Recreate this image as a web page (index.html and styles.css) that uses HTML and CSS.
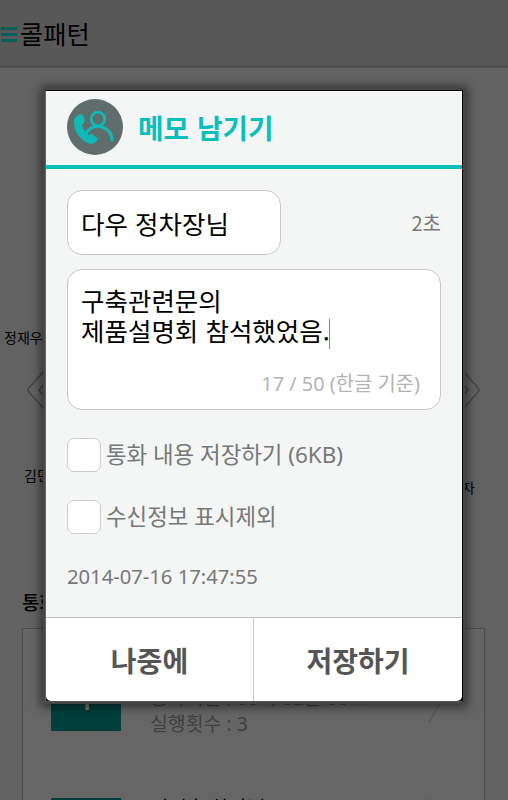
FILE: index.html
```html
<!DOCTYPE html>
<html lang="ko">
<head>
    <meta charset="UTF-8">
    <meta name="viewport" content="width=device-width, initial-scale=1.0">
    <title>콜패턴</title>
    <link rel="stylesheet" href="styles.css">
</head>
<body>
    <!-- 뒤쪽 화면 -->
    <div class="app">
        <header class="app-header">
            <div class="menu-icon"><span></span><span></span><span></span></div>
            <h1>콜패턴</h1>
        </header>

        <div class="pattern">
            <div class="name-first">정재우</div>
            <div class="arrows">
                <svg width="26" height="40" viewBox="0 0 26 40"><path d="M17 1 2 18q-2 2 0 4l15 17M17 14l-5 6 5 6"/></svg>
                <svg width="26" height="40" viewBox="0 0 26 40"><path d="M9 1l15 17q2 2 0 4L9 39M9 14l5 6-5 6"/></svg>
            </div>
            <div class="names">
                <span>김민</span>
                <span class="name-last">자</span>
            </div>
        </div>

        <h2 class="section-title">통화</h2>
        <div class="call-list">
            <div class="call-item">
                <div class="rank">1</div>
                <div class="call-info">
                    <span>통화시간 : 00시 02분 08초</span>
                    <span>실행횟수 : 3</span>
                </div>
                <svg class="more" width="20" height="70" viewBox="0 0 20 70"><path d="M3 9l15 26L3 61"/></svg>
            </div>
            <div class="call-item">
                <div class="rank"></div>
                <div class="call-info">
                    <strong>김기훈 차장님</strong>
                </div>
                <svg class="more" width="20" height="70" viewBox="0 0 20 70"><path d="M3 1l15 26L3 53"/></svg>
            </div>
        </div>
    </div>

    <!-- 메모 팝업 -->
    <div class="dialog">
        <div class="dialog-header">
            <svg class="dialog-icon" width="56" height="56" viewBox="0 0 56 56">
                <circle cx="28" cy="28" r="28" fill="#5f6e6d"/>
                <circle cx="31" cy="20" r="6.8" fill="none" stroke="#0eb9b7" stroke-width="2.8"/>
                <path d="M19.500 34c2-4 6.500-6.500 11.500-6.500 8 0 14 6 14 13.500" fill="none" stroke="#0eb9b7" stroke-width="3" stroke-linecap="round"/>
                <path d="M12.500 15.500c2.500-.8 4 .2 4.400 2.500l.6 3.500c.3 2-.7 3.300-2.700 4.500 1.200 4 3.800 8 7.200 10.200 2-1.500 3.300-1.400 5 0l2.500 2.200c1.500 1.400 1.100 3.100-.7 4.600-2.600 2.200-6.500 2.200-10.100-.1C11.500 38.500 7 31 7 23.500c0-4 2-7 5.500-8z" fill="#0eb9b7"/>
            </svg>
            <h2>메모 남기기</h2>
        </div>
        <div class="dialog-body">
            <div class="contact-row">
                <div class="contact-name">다우 정차장님</div>
                <span class="duration">2초</span>
            </div>
            <div class="memo">
                <div class="memo-text">구축관련문의<br>제품설명회 참석했었음.<span class="caret"></span></div>
                <div class="memo-count">17 / 50 (한글 기준)</div>
            </div>
            <label class="check-row"><span class="checkbox"></span><span>통화 내용 저장하기 (6KB)</span></label>
            <label class="check-row"><span class="checkbox"></span><span>수신정보 표시제외</span></label>
            <div class="timestamp">2014-07-16 17:47:55</div>
        </div>
        <div class="dialog-footer">
            <button>나중에</button>
            <button>저장하기</button>
        </div>
    </div>
</body>
</html>
```
FILE: styles.css
```css
* {
    box-sizing: border-box;
}

body {
    margin: 0;
    width: 508px;
    height: 800px;
    position: relative;
    overflow: hidden;
    background: #626262;
    color: #000;
    font-family: "Noto Sans CJK KR", sans-serif;
}

h1, h2 {
    margin: 0;
}

svg path {
    stroke-linejoin: round;
}

.app {
    height: 800px;
    overflow: hidden;
}

.app-header {
    display: flex;
    align-items: center;
    height: 68px;
    background: #585858;
    border-bottom: 3px solid #505050;
}

.menu-icon {
    display: flex;
    flex-direction: column;
    gap: 3px;
    width: 17px;
    padding-left: 1px;
    margin-right: 3px;
    margin-top: 3px;
}

.menu-icon span {
    height: 3px;
    background: #075e5e;
}

.app-header h1 {
    font-size: 25.3px;
    font-weight: 400;
    line-height: 36px;
}

/* 통화 패턴 영역 */
.pattern {
    height: 521px;
    padding-top: 259px;
    font-size: 14px;
    line-height: 20px;
}

.name-first {
    padding-left: 4px;
}

.arrows {
    display: flex;
    justify-content: space-between;
    padding: 23px 28px 0 27px;
}

.arrows path {
    fill: none;
    stroke: #444;
    stroke-width: 1.4;
}

.names {
    display: flex;
    justify-content: space-between;
    padding: 55px 33px 0 24px;
}

.name-last {
    padding-top: 12px;
}

.section-title {
    height: 39px;
    padding-left: 22px;
    font-size: 19px;
    font-weight: 500;
    line-height: 26px;
}

.call-list {
    width: 463px;
    height: 300px;
    margin-left: 22px;
    padding: 32px 38px 0 28px;
    border: 1px solid #4b4b4b;
    background: #666;
}

.call-item {
    display: flex;
    height: 137px;
}

.rank {
    width: 70px;
    height: 70px;
    margin-right: 29px;
    background: #003f3b;
    color: #777;
    font-family: "Noto Sans", sans-serif;
    font-size: 34px;
    font-weight: 500;
    line-height: 72px;
    text-align: center;
}

.call-info {
    flex: 1;
    display: flex;
    flex-direction: column;
    font-family: "Noto Sans", "Noto Sans CJK KR", sans-serif;
    font-size: 19.4px;
    line-height: 26px;
    color: #404040;
}

.call-info span:first-child {
    margin-top: 24px;
}

.call-info strong {
    margin-top: -2px;
    font-size: 20px;
    font-weight: 400;
    color: #000;
}

.more path {
    fill: none;
    stroke: #5b5b5b;
    stroke-width: 2;
}

/* 메모 팝업 */
.dialog {
    position: absolute;
    left: 45px;
    top: 90px;
    width: 418px;
    height: 612px;
    display: flex;
    flex-direction: column;
    border: 1px solid #000;
    border-left-color: #666;
    border-bottom-color: #555;
    background: #000;
    box-shadow: 0 0 0 2px #464646, 0 1px 10px 4px rgba(0, 0, 0, 0.55);
}

.dialog-header {
    display: flex;
    align-items: center;
    height: 78px;
    padding: 0 21px 3px;
    background: #f4f6f6;
    border-bottom: 4px solid #07c0c0;
}

.dialog-header h2 {
    margin-left: 15px;
    font-size: 27.8px;
    font-weight: 700;
    line-height: 40px;
    color: #09bfbd;
}

.dialog-body {
    flex: 1;
    padding: 21px 21px 0;
    background: #f4f6f6;
    color: #777;
}

.contact-row {
    display: flex;
    align-items: center;
    justify-content: space-between;
}

.contact-name {
    width: 214px;
    height: 65px;
    padding-left: 13px;
    border: 1px solid #c8c8c8;
    border-radius: 15px;
    background: #fff;
    color: #000;
    font-size: 25.5px;
    line-height: 63px;
}

.duration {
    font-size: 20px;
}

.memo {
    display: flex;
    flex-direction: column;
    justify-content: space-between;
    height: 141px;
    margin-top: 14px;
    padding: 15px 20px 10px 13px;
    border: 1px solid #c8c8c8;
    border-radius: 15px;
    background: #fff;
}

.memo-text {
    color: #000;
    font-size: 25.5px;
    line-height: 30px;
    white-space: nowrap;
}

.caret {
    display: inline-block;
    width: 1px;
    height: 30px;
    margin-left: -1px;
    background: #888;
    vertical-align: middle;
}

.memo-count {
    color: #b4b4b4;
    font-family: "Noto Sans", "Noto Sans CJK KR", sans-serif;
    font-size: 19.9px;
    line-height: 30px;
    text-align: right;
}

.check-row {
    display: flex;
    align-items: center;
    height: 34px;
    margin-top: 28px;
    font-family: "Noto Sans", "Noto Sans CJK KR", sans-serif;
    font-size: 22.4px;
    line-height: 32px;
}

.checkbox {
    width: 34px;
    height: 34px;
    margin-right: 5px;
    border: 1px solid #ccc;
    border-radius: 7px;
    background: #fff;
}

.timestamp {
    margin-top: 27px;
    font-family: "Noto Sans", sans-serif;
    font-size: 20.2px;
    line-height: 30px;
}

.dialog-footer {
    display: flex;
    height: 84px;
    border-top: 1px solid #bcc0c0;
    border-radius: 0 0 5px 5px;
    background: #fff;
    overflow: hidden;
}

.dialog-footer button {
    flex: 1;
    padding: 0;
    border: none;
    background: none;
    font-family: inherit;
    font-size: 28px;
    font-weight: 700;
    color: #555;
}

.dialog-footer button:first-child {
    flex: 0 0 207px;
}

.dialog-footer button + button {
    border-left: 1px solid #c8c8c8;
}
```
